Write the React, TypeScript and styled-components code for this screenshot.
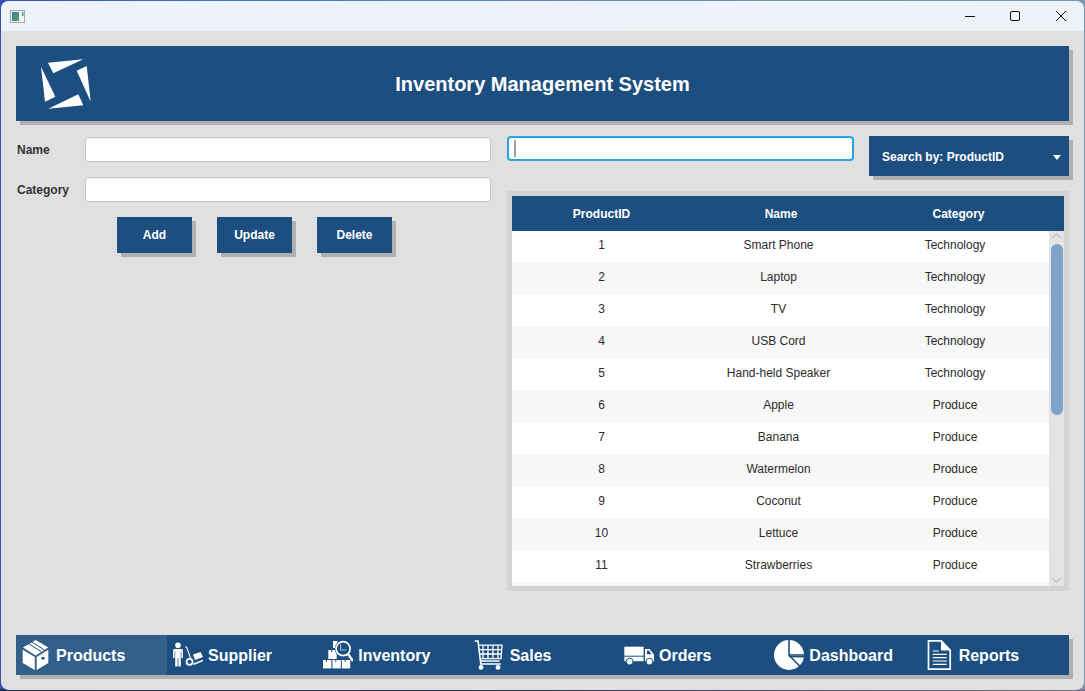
import styled, { createGlobalStyle } from "styled-components";

const GlobalStyle = createGlobalStyle`
  html, body {
    margin: 0;
    padding: 0;
    overflow: hidden;
  }

  * {
    box-sizing: border-box;
  }
`;

const BLUE = "#1c4e80";
const SHADOW = "4px 4px 0 #b0b0b0";

const Desktop = styled.div`
  width: 1085px;
  height: 691px;
  padding: 1px;
  background:
    linear-gradient(90deg, #1d2f4e, #34305e 50%, #7a7290) bottom / 100% 2px no-repeat,
    linear-gradient(90deg, #3b50b4 0%, #3a7fc0 25%, #6d8fb5 60%, #7d97b3 100%);
  font-family: "Liberation Sans", Arial, sans-serif;
`;

const Window = styled.div`
  height: 689px;
  display: flex;
  flex-direction: column;
  border-radius: 8px;
  overflow: hidden;
  background: #e0e0e0;
`;

const TitleBar = styled.div`
  height: 30px;
  flex-shrink: 0;
  display: flex;
  align-items: center;
  justify-content: space-between;
  padding: 0 18px 0 9px;
  background: linear-gradient(90deg, #eef2fb, #ecf3f8);
`;

const WindowControls = styled.div`
  display: flex;
  align-items: center;
  gap: 35px;

  svg:last-child {
    margin-left: 1px;
  }
`;

const Content = styled.div`
  flex: 1;
  display: flex;
  flex-direction: column;
  padding: 15px;
`;

const HeaderBar = styled.header`
  height: 75px;
  flex-shrink: 0;
  display: grid;
  grid-template-columns: 1fr auto 1fr;
  align-items: center;
  padding-left: 25px;
  background: ${BLUE};
  box-shadow: ${SHADOW};
`;

const Title = styled.h1`
  margin: 0 0 0 -25px;
  padding-top: 1px;
  color: #fff;
  font-size: 20px;
  font-weight: 700;
`;

const Main = styled.div`
  margin-top: 15px;
  display: flex;
  gap: 16px;
`;

const FormColumn = styled.section`
  width: 475px;
  padding-top: 1px;
  display: flex;
  flex-direction: column;
  gap: 15px;
`;

const FormRow = styled.label`
  display: flex;
  align-items: center;
  height: 25px;
`;

const FieldLabel = styled.span`
  width: 69px;
  padding-left: 1px;
  color: #333;
  font-size: 12px;
  font-weight: 700;
`;

const TextInput = styled.input`
  flex: 1;
  height: 25px;
  border: 1px solid #c6c6c6;
  border-radius: 3px;
  background: #fff;
  box-shadow: inset 0 1px 2px rgba(0, 0, 0, 0.08);
  outline: none;
`;

const ButtonRow = styled.div`
  display: flex;
  gap: 25px;
  padding-left: 101px;
`;

const ActionButton = styled.button`
  width: 75px;
  height: 36px;
  border: none;
  padding: 0;
  background: ${BLUE};
  box-shadow: ${SHADOW};
  color: #fff;
  font-family: inherit;
  font-size: 12px;
  font-weight: 700;
`;

const TableColumn = styled.section`
  width: 562px;
`;

const SearchRow = styled.div`
  display: flex;
  align-items: flex-start;
  gap: 15px;
  height: 40px;
`;

const SearchBox = styled.div`
  width: 347px;
  height: 25px;
  display: flex;
  align-items: center;
  padding-left: 5px;
  border: 2px solid #22a6de;
  border-radius: 4px;
  background: #fff;
`;

const Caret = styled.span`
  width: 2px;
  height: 17px;
  background: #a0a0a0;
`;

const SearchSelect = styled.div`
  width: 200px;
  height: 40px;
  display: flex;
  align-items: center;
  justify-content: space-between;
  padding: 2px 8px 0 13px;
  background: ${BLUE};
  box-shadow: ${SHADOW};
  color: #fff;
  font-size: 12px;
  font-weight: 700;
`;

const SelectArrow = styled.span`
  width: 0;
  height: 0;
  border-left: 4px solid transparent;
  border-right: 4px solid transparent;
  border-top: 5px solid #fff;
`;

const TableFrame = styled.div`
  margin-top: 15px;
  height: 400px;
  border: 5px solid #d3d3d3;
  display: flex;
  flex-direction: column;
  background: #e3e3e3;
`;

const HeadRow = styled.div`
  height: 35px;
  flex-shrink: 0;
  display: grid;
  grid-template-columns: 179px 180px 175px;
  align-items: center;
  background: ${BLUE};
  color: #fff;
  font-size: 12px;
  font-weight: 700;
  text-align: center;
`;

const TableBody = styled.div`
  flex: 1;
  min-height: 0;
  display: flex;
`;

const RowList = styled.div`
  width: 537px;
  overflow: hidden;
`;

const Row = styled.div<{ $shaded: boolean }>`
  height: 32px;
  display: grid;
  grid-template-columns: 179px 175px 178px;
  align-items: center;
  padding-bottom: 4px;
  background: ${(p) => (p.$shaded ? "#f7f7f7" : "#fff")};
  color: #2b2b2b;
  font-size: 12px;
  text-align: center;
`;

const ScrollTrack = styled.div`
  flex: 1;
  display: flex;
  flex-direction: column;
  align-items: center;
  padding-top: 2px;
`;

const ScrollThumb = styled.div`
  width: 12px;
  height: 171px;
  margin-top: 6px;
  border-radius: 6px;
  background: #7fa3c9;
`;

const ScrollDown = styled.div`
  display: flex;
  margin-top: auto;
  padding-bottom: 3px;
`;

const NavBar = styled.nav`
  margin-top: auto;
  height: 40px;
  flex-shrink: 0;
  display: grid;
  grid-template-columns: 151px repeat(6, 1fr);
  background: ${BLUE};
  box-shadow: ${SHADOW};
`;

const NavItem = styled.div<{ $active?: boolean }>`
  display: flex;
  align-items: center;
  gap: 5px;
  padding-left: 6px;
  background: ${(p) => (p.$active ? "#335f8b" : "transparent")};
  color: #fff;
  font-size: 16px;
  font-weight: 700;
`;

const NavLabel = styled.span<{ $shift?: number }>`
  margin-left: ${(p) => p.$shift ?? 0}px;
  padding-top: 1px;
`;

const NavIcon = styled.svg`
  flex-shrink: 0;
  fill: #fff;
`;

const products = [
  { id: 1, name: "Smart Phone", category: "Technology" },
  { id: 2, name: "Laptop", category: "Technology" },
  { id: 3, name: "TV", category: "Technology" },
  { id: 4, name: "USB Cord", category: "Technology" },
  { id: 5, name: "Hand-held Speaker", category: "Technology" },
  { id: 6, name: "Apple", category: "Produce" },
  { id: 7, name: "Banana", category: "Produce" },
  { id: 8, name: "Watermelon", category: "Produce" },
  { id: 9, name: "Coconut", category: "Produce" },
  { id: 10, name: "Lettuce", category: "Produce" },
  { id: 11, name: "Strawberries", category: "Produce" },
];

const AppGlyph = () => (
  <svg width="15" height="13" viewBox="0 0 15 13">
    <defs>
      <linearGradient id="appGlyph" x1="0" y1="0" x2="1" y2="1">
        <stop offset="0" stopColor="#3f7f9c" />
        <stop offset="1" stopColor="#4ea36e" />
      </linearGradient>
    </defs>
    <rect x="0.5" y="0.5" width="14" height="12" fill="#f2f2f2" stroke="#a8a8a8" />
    <rect x="2" y="2" width="7" height="9" fill="url(#appGlyph)" />
    <rect x="12" y="2" width="1.5" height="4" fill="#4e9a7a" />
  </svg>
);

const MinimizeGlyph = () => (
  <svg width="10" height="10" viewBox="0 0 10 10">
    <path d="M0 5.5h10" stroke="#111" fill="none" />
  </svg>
);

const MaximizeGlyph = () => (
  <svg width="10" height="10" viewBox="0 0 10 10">
    <rect x="0.5" y="0.5" width="9" height="9" rx="1.5" stroke="#111" fill="none" />
  </svg>
);

const CloseGlyph = () => (
  <svg width="10" height="10" viewBox="0 0 10 10">
    <path d="M0 0l10 10M10 0L0 10" stroke="#111" fill="none" />
  </svg>
);

const Logo = () => (
  <svg width="50" height="50" viewBox="41 59 50 50" fill="#fff">
    <polygon points="48,62.7 83.3,59.3 53.3,73.3" />
    <polygon points="76.7,70.7 86.7,66 90.7,101.7" />
    <polygon points="48.3,108.7 78.3,94.3 83.3,105.3" />
    <polygon points="41,66.7 55.3,96.7 45,101.7" />
  </svg>
);

const Chevron = ({ up }: { up?: boolean }) => (
  <svg width="9" height="5" viewBox="0 0 9 5">
    <path d={up ? "M0.5 4.5L4.5 1L8.5 4.5" : "M0.5 0.5L4.5 4L8.5 0.5"} stroke="#aaa" fill="none" />
  </svg>
);

const BoxIcon = () => (
  <NavIcon width="30" height="30" viewBox="0 0 30 30">
    <polygon points="13.7,0 26.3,7.6 13.7,15.6 1,7.6" />
    <polygon points="0.7,9.8 12.8,17 12.8,30 0.7,23" />
    <polygon points="14.7,17 26.3,9.8 26.3,23 14.7,30" />
    <path d="M6.2 3.4l12.8 8M9.4 1.8l12.8 8" stroke="#1c4e80" strokeWidth="1" fill="none" />
    <rect x="19.5" y="17" width="3" height="2.5" fill="#1c4e80" />
  </NavIcon>
);

const SupplierIcon = () => (
  <NavIcon width="30" height="30" viewBox="0 0 30 30">
    <circle cx="5" cy="5.3" r="2.8" />
    <path d="M1.5 9h7a1.4 1.4 0 0 1 1.4 1.4v7.6H8.4v-6.4h-.6v15H5.4v-8.4h-.8v8.4H2.2v-15h-.6v6.4H.1v-7.6A1.4 1.4 0 0 1 1.5 9z" />
    <path d="M12 6.7l1.6.4 4.2 11.6" stroke="#fff" strokeWidth="1.1" fill="none" />
    <path d="M20.5 24.3l9.5-3.8" stroke="#fff" strokeWidth="1.6" fill="none" />
    <circle cx="16.6" cy="21.8" r="3" fill="none" stroke="#fff" strokeWidth="1.8" />
    <polygon points="20,14.5 27.5,12 30,17 22,20" />
  </NavIcon>
);

const InventoryIcon = () => (
  <NavIcon width="30" height="30" viewBox="0 0 30 30">
    <rect x="0" y="20" width="8.4" height="8.4" />
    <rect x="9.4" y="20" width="8.4" height="8.4" />
    <rect x="18.8" y="20" width="8.4" height="8.4" />
    <rect x="5.3" y="10" width="8.4" height="9" />
    <rect x="10" y="1" width="4.5" height="7" />
    <path d="M3.4 20v2M12.8 20v2M22.2 20v2M8.7 10v2" stroke="#1c4e80" strokeWidth="1" fill="none" />
    <circle cx="20.1" cy="8.7" r="8.4" fill="#1c4e80" />
    <circle cx="20.1" cy="8.7" r="7" fill="none" stroke="#fff" strokeWidth="1.7" />
    <path d="M17.6 4.2v5.8h6" stroke="#9fb6cd" strokeWidth="1.2" fill="none" />
    <path d="M25 14l5 7" stroke="#fff" strokeWidth="2.4" fill="none" />
  </NavIcon>
);

const CartIcon = () => (
  <NavIcon width="31" height="30" viewBox="1 0 31 30">
    <path d="M1.7 1H5l2.8 23h20" fill="none" stroke="#fff" strokeWidth="1.6" />
    <path
      d="M5.6 5.2H29l-1 13.4H7.2M10 5.2v13.4M15 5.2v13.4M20 5.2v13.4M25 5.2v13.4M6 9.6h23M6.6 14h22M7.6 21h19"
      fill="none"
      stroke="#fff"
      strokeWidth="1.3"
    />
    <circle cx="8" cy="27.4" r="2.4" />
    <circle cx="25" cy="27.4" r="2.4" />
  </NavIcon>
);

const TruckIcon = () => (
  <NavIcon width="30" height="30" viewBox="0 0 30 30">
    <rect x="0.3" y="6.7" width="19.3" height="9" />
    <rect x="0.3" y="16.7" width="19.3" height="4.5" />
    <path d="M21 9h4.6l4.7 6v6.2H21z" />
    <path d="M23 10.6h2l2.4 3.6H23z" fill="#1c4e80" />
    <circle cx="5.6" cy="21.6" r="3.4" stroke="#1c4e80" />
    <circle cx="25.4" cy="21.6" r="3.4" stroke="#1c4e80" />
  </NavIcon>
);

const PieIcon = () => (
  <NavIcon width="30" height="30" viewBox="0 0 30 30">
    <circle cx="15" cy="15" r="15" />
    <path d="M15 0v15h15M15 15l11.5 12" stroke="#1c4e80" strokeWidth="1.6" fill="none" />
    <path d="M15 16.6h15" stroke="#1c4e80" strokeWidth="1.6" fill="none" />
  </NavIcon>
);

const ReportIcon = () => (
  <NavIcon width="30" height="30" viewBox="0 0 30 30">
    <path d="M3.5 0.8h12.7l9 9.6v18.8H3.5z" fill="none" stroke="#fff" strokeWidth="1.7" />
    <path d="M16 1v9.6h9z" />
    <path d="M7.7 11h6M7.7 14.3h14M7.7 17.7h14M7.7 21h14M7.7 24.3h14" stroke="#fff" strokeWidth="1.2" fill="none" />
  </NavIcon>
);

const App = () => {
  return (
    <>
      <GlobalStyle />
      <Desktop>
        <Window>
          <TitleBar>
            <AppGlyph />
            <WindowControls>
              <MinimizeGlyph />
              <MaximizeGlyph />
              <CloseGlyph />
            </WindowControls>
          </TitleBar>

          <Content>
            <HeaderBar>
              <Logo />
              <Title>Inventory Management System</Title>
            </HeaderBar>

            <Main>
              <FormColumn>
                <FormRow>
                  <FieldLabel>Name</FieldLabel>
                  <TextInput type="text" />
                </FormRow>
                <FormRow>
                  <FieldLabel>Category</FieldLabel>
                  <TextInput type="text" />
                </FormRow>
                <ButtonRow>
                  <ActionButton>Add</ActionButton>
                  <ActionButton>Update</ActionButton>
                  <ActionButton>Delete</ActionButton>
                </ButtonRow>
              </FormColumn>

              <TableColumn>
                <SearchRow>
                  <SearchBox>
                    <Caret />
                  </SearchBox>
                  <SearchSelect>
                    Search by: ProductID
                    <SelectArrow />
                  </SearchSelect>
                </SearchRow>

                <TableFrame>
                  <HeadRow>
                    <span>ProductID</span>
                    <span>Name</span>
                    <span>Category</span>
                  </HeadRow>
                  <TableBody>
                    <RowList>
                      {products.map((item, index) => (
                        <Row key={item.id} $shaded={index % 2 === 1}>
                          <span>{item.id}</span>
                          <span>{item.name}</span>
                          <span>{item.category}</span>
                        </Row>
                      ))}
                      <Row $shaded />
                    </RowList>
                    <ScrollTrack>
                      <Chevron up />
                      <ScrollThumb />
                      <ScrollDown>
                        <Chevron />
                      </ScrollDown>
                    </ScrollTrack>
                  </TableBody>
                </TableFrame>
              </TableColumn>
            </Main>

            <NavBar>
              <NavItem $active>
                <BoxIcon />
                <NavLabel $shift={-1}>Products</NavLabel>
              </NavItem>
              <NavItem>
                <SupplierIcon />
                <NavLabel>Supplier</NavLabel>
              </NavItem>
              <NavItem>
                <InventoryIcon />
                <NavLabel>Inventory</NavLabel>
              </NavItem>
              <NavItem>
                <CartIcon />
                <NavLabel>Sales</NavLabel>
              </NavItem>
              <NavItem>
                <TruckIcon />
                <NavLabel>Orders</NavLabel>
              </NavItem>
              <NavItem>
                <PieIcon />
                <NavLabel>Dashboard</NavLabel>
              </NavItem>
              <NavItem>
                <ReportIcon />
                <NavLabel $shift={-1}>Reports</NavLabel>
              </NavItem>
            </NavBar>
          </Content>
        </Window>
      </Desktop>
    </>
  );
};

export default App;
